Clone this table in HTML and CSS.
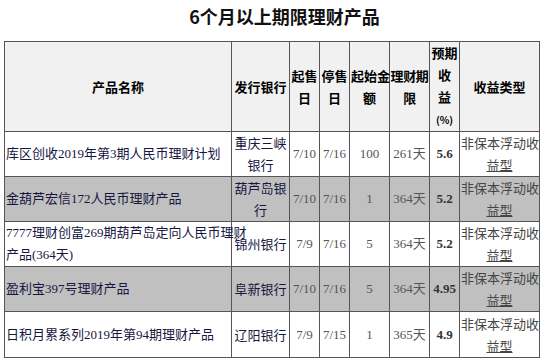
FILE: index.html
```html
<!DOCTYPE html>
<html lang="zh-CN">
<head>
<meta charset="utf-8">
<title>6个月以上期限理财产品</title>
<link rel="stylesheet" href="styles.css">
</head>
<body>
<h1 class="title">6个月以上期限理财产品</h1>
<table class="grid">
  <colgroup>
    <col class="c-name"><col class="c-bank"><col class="c-d"><col class="c-d"><col class="c-w"><col class="c-w"><col class="c-d"><col class="c-type">
  </colgroup>
  <thead>
    <tr class="head">
      <th>产品名称</th>
      <th>发行银行</th>
      <th>起售<br>日</th>
      <th>停售<br>日</th>
      <th>起始金<br>额</th>
      <th class="tight">理财期<br>限</th>
      <th>预期<br>收<br>益<br><span class="pct">(%)</span></th>
      <th>收益类型</th>
    </tr>
  </thead>
  <tbody>
    <tr class="row">
      <td class="name">库区创收2019年第3期人民币理财计划</td>
      <td class="bank">重庆三峡<br>银行</td>
      <td class="num">7/10</td>
      <td class="num">7/16</td>
      <td class="num">100</td>
      <td class="num">261天</td>
      <td class="yield">5.6</td>
      <td class="type">非保本浮动收<br><span class="u">益型</span></td>
    </tr>
    <tr class="row alt">
      <td class="name">金葫芦宏信172人民币理财产品</td>
      <td class="bank">葫芦岛银<br>行</td>
      <td class="num">7/10</td>
      <td class="num">7/16</td>
      <td class="num">1</td>
      <td class="num">364天</td>
      <td class="yield">5.2</td>
      <td class="type">非保本浮动收<br><span class="u">益型</span></td>
    </tr>
    <tr class="row">
      <td class="name">7777理财创富269期葫芦岛定向人民币理财<br>产品(364天)</td>
      <td class="bank">锦州银行</td>
      <td class="num">7/9</td>
      <td class="num">7/16</td>
      <td class="num">5</td>
      <td class="num">364天</td>
      <td class="yield">5.2</td>
      <td class="type">非保本浮动收<br><span class="u">益型</span></td>
    </tr>
    <tr class="row alt">
      <td class="name">盈利宝397号理财产品</td>
      <td class="bank">阜新银行</td>
      <td class="num">7/10</td>
      <td class="num">7/16</td>
      <td class="num">5</td>
      <td class="num">364天</td>
      <td class="yield">4.95</td>
      <td class="type">非保本浮动收<br><span class="u">益型</span></td>
    </tr>
    <tr class="row last">
      <td class="name">日积月累系列2019年第94期理财产品</td>
      <td class="bank">辽阳银行</td>
      <td class="num">7/9</td>
      <td class="num">7/15</td>
      <td class="num">1</td>
      <td class="num">365天</td>
      <td class="yield">4.9</td>
      <td class="type">非保本浮动收<br><span class="u">益型</span></td>
    </tr>
  </tbody>
</table>
</body>
</html>
```

FILE: styles.css
```css
html, body {
  margin: 0;
  padding: 0;
  background: #ffffff;
}
body {
  font-family: "Liberation Serif", "Noto Sans CJK SC", serif;
  font-size: 13px;
  color: #333;
}
.title {
  margin: 0 0 9px 0;
  padding-left: 24px;
  height: 32px;
  line-height: 32px;
  text-align: center;
  font-family: "Noto Sans CJK SC", sans-serif;
  font-size: 18px;
  font-weight: bold;
  color: #111;
}
.grid {
  margin-left: 4px;
  border-collapse: collapse;
  table-layout: fixed;
  width: 535px;
}
.c-name { width: 227px; }
.c-bank { width: 58px; }
.c-d { width: 30px; }
.c-w { width: 40px; }
.c-type { width: 80px; }
.grid th, .grid td {
  border: 1px solid #555;
  padding: 0 1px;
  vertical-align: middle;
  line-height: 22px;
  overflow: visible;
  white-space: nowrap;
}
.head {
  height: 89px;
  background: #f1f1f1;
}
.head th {
  font-family: "Noto Sans CJK SC", sans-serif;
  font-size: 13px;
  font-weight: bold;
  color: #000;
  text-align: center;
}
.head th.tight {
  padding: 0;
  letter-spacing: -0.3px;
}
.pct {
  font-size: 10px;
}
.row { height: 45px; }
.row.last { height: 46px; }
.row.alt { background: #c0c0c0; }
.name {
  text-align: left;
  color: #16163f;
}
.bank {
  text-align: center;
  font-family: "Noto Sans CJK SC", sans-serif;
  color: #16163f;
}
.num {
  text-align: center;
  color: #555;
}
.yield {
  text-align: center;
  font-weight: bold;
  color: #333;
}
.type {
  text-align: center;
  font-family: "Noto Sans CJK SC", sans-serif;
  color: #444;
}
.u {
  text-decoration: underline;
}
```
